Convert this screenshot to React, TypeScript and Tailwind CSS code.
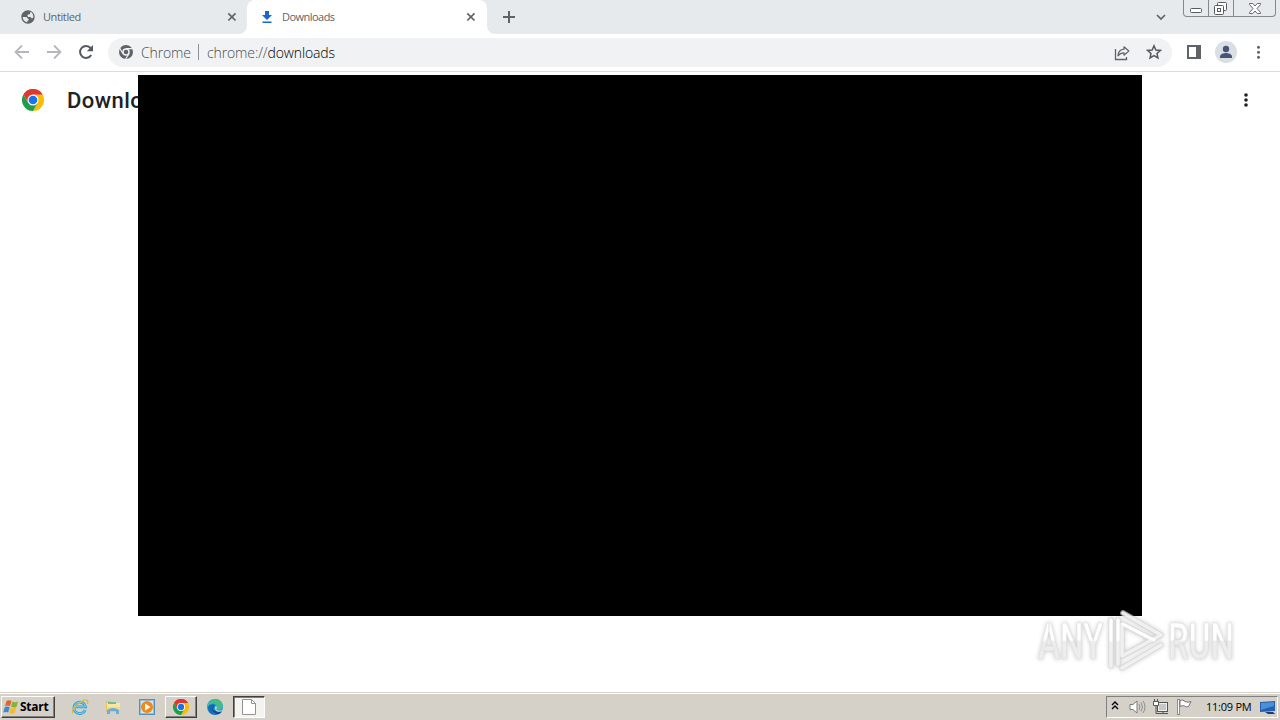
import type { ReactNode } from "react";

function Icon({ w, h, box, className = "", children }: { w: number; h: number; box?: string; className?: string; children: ReactNode }) {
  return (
    <svg width={w} height={h} viewBox={box ?? `0 0 ${w} ${h}`} className={`shrink-0 ${className}`} fill="none">
      {children}
    </svg>
  );
}

const Close = () => (
  <Icon w={10} h={10}>
    <path d="M1.3 1.3l7.2 7.2M8.5 1.3L1.3 8.5" stroke="#5f6368" strokeWidth="1.7" />
  </Icon>
);

const ChromeLogo = ({ size }: { size: number }) => (
  <Icon w={size} h={size} box="0 0 48 48">
    <path d="M24 24L3.2 12A24 24 0 0 1 44.8 12L24 12Z" fill="#ea4335" />
    <path d="M24 12H44.8A24 24 0 0 1 24 48L34.4 30Z" fill="#fbbc04" />
    <path d="M3.2 12L13.6 30L34.4 30L24 48A24 24 0 0 1 3.2 12Z" fill="#1e9e49" />
    <path d="M3.2 12A24 24 0 0 1 44.8 12H24L13.6 30Z" fill="#df392e" />
    <circle cx="24" cy="24" r="12" fill="#fff" />
    <circle cx="24" cy="24" r="9.5" fill="#1a73e8" />
  </Icon>
);

function TabStrip() {
  return (
    <div className="flex h-[34px] shrink-0 bg-[#e7eaed] text-[11px] leading-[34px] text-[#5f6368]">
      <div className="flex w-[247px] items-center pl-[20px]">
        <Icon w={16} h={16} box="0 0 24 24">
          <path fill="#5f6368" d="M12 2C6.48 2 2 6.48 2 12s4.48 10 10 10 10-4.48 10-10S17.52 2 12 2zm8 10c0 .5-.1 1-.2 1.500L17 14l-1-2h-4l-1-3 2-1h2V5l2-.3c1.800 1.400 3 4.200 3 7.300zM4 12h6l1 2 2 1v2l-2 1v1.900C7 19.500 4 16.100 4 12z" />
        </Icon>
        <span className="ml-[7px] w-[184px] tracking-[-0.4px]">Untitled</span>
        <Close />
      </div>
      <div className="relative flex w-[240px] items-center rounded-t-[8px] bg-white pl-[14px]">
        <Icon w={8} h={8} className="absolute -left-[8px] bottom-0"><path d="M8 0V8H0A8 8 0 0 0 8 0" fill="white" /></Icon>
        <Icon w={8} h={8} className="absolute -right-[8px] bottom-0"><path d="M0 0V8H8A8 8 0 0 1 0 0" fill="white" /></Icon>
        <Icon w={12} h={14}>
          <path d="M4 1h4v4h3L6 10 1 5h3zM1.500 11.500h9v1.500h-9z" fill="#1967d2" />
        </Icon>
        <span className="ml-[9px] w-[184px] tracking-[-0.53px]">Downloads</span>
        <Close />
      </div>
      <div className="flex flex-1 items-center pl-[15px]">
        <Icon w={14} h={14}><path d="M7 1v12M1 7h12" stroke="#5f6368" strokeWidth="2" /></Icon>
      </div>
      <div className="flex w-[28px] items-center"><Icon w={12} h={8}><path d="M2 2l4 4 4-4" stroke="#5f6368" strokeWidth="1.7" /></Icon></div>
      <div className="mr-[4px] flex h-[17px] w-[93px] rounded-b-[4px] border border-t-0 border-[#85898e]">
        <div className="flex w-[25px] justify-center border-r border-[#85898e] pt-[8px]">
          <Icon w={12} h={5}><rect x=".5" y=".5" width="11" height="4" rx="1" fill="#fff" stroke="#555b63" /></Icon>
        </div>
        <div className="flex w-[25px] justify-center border-r border-[#85898e] pr-px pt-[2px]">
          <Icon w={13} h={13}>
            <rect x="3.500" y=".5" width="9" height="8" rx="1" stroke="#555b63" fill="#fff" />
            <rect x=".5" y="3.500" width="9" height="9" rx="1" stroke="#555b63" fill="#fff" />
            <rect x="3.500" y="6.500" width="3" height="3" stroke="#555b63" />
          </Icon>
        </div>
        <div className="flex flex-1 justify-center pt-[3px]">
          <Icon w={12} h={11}>
            <path d="M.5.5h3.200L6 3 8.300.5h3.200v1L8 5.500l3.500 4v1H8.300L6 8 3.700 10.500H.5v-1L4 5.500.5 1.500z" fill="#fff" stroke="#555b63" strokeWidth=".9" />
          </Icon>
        </div>
      </div>
    </div>
  );
}

function Toolbar() {
  return (
    <div className="flex h-[38px] shrink-0 items-center border-b border-[#d9dbde] bg-white">
      <div className="flex w-[108px] gap-[16px] pb-px pl-[14px]">
        <Icon w={16} h={16}><path d="M15 8H2M8 1.500L1.500 8 8 14.500" stroke="#b5b7ba" strokeWidth="1.800" /></Icon>
        <Icon w={16} h={16}><path d="M1 8h13M8 1.500L14.500 8 8 14.500" stroke="#b5b7ba" strokeWidth="1.800" /></Icon>
        <Icon w={16} h={16}>
          <path d="M13.200 11A6 6 0 1 1 12.600 4" stroke="#55595e" strokeWidth="2" />
          <path d="M15 1v6.200H8.800z" fill="#55595e" />
        </Icon>
      </div>
      <div className="flex h-[29px] w-[1064px] items-center rounded-full bg-[#f0f2f4] pl-[10px] text-[14px] font-light text-[#484c51]">
        <Icon w={16} h={16} className="-translate-y-px">
          <circle cx="8" cy="8" r="7" fill="#5f6368" />
          <circle cx="8" cy="8" r="3" stroke="#f0f2f4" strokeWidth="1.500" />
          <path d="M8 4.600h6.500M5 9.700L1.600 4M11 9.700L7.600 15" stroke="#f0f2f4" strokeWidth="1.200" />
        </Icon>
        <span className="ml-[7px] w-[57px] tracking-[-0.15px]">Chrome</span>
        <span className="h-[16px] w-px -translate-y-px bg-[#8d9196]" />
        <span className="ml-[8px] flex-1 tracking-[-0.12px]">chrome://<span className="text-black">downloads</span></span>
        <Icon w={16} h={16} className="mr-[16px]">
          <path d="M1.500 4v10.500h11V12" stroke="#5f6368" strokeWidth="1.300" />
          <path d="M10 1.800L14.800 6 10 10.200V7.800C7 7.800 5.500 8.800 4 10.800 4.300 7 6.300 4.500 10 4.200z" stroke="#5f6368" strokeWidth="1.200" strokeLinejoin="round" />
        </Icon>
        <Icon w={16} h={16} className="mr-[10px] -translate-y-px">
          <path d="M8 1.800l1.850 4.150 4.550.45-3.400 3.050.95 4.450L8 11.600 4.050 13.900 5 9.450 1.600 6.400l4.550-.45z" stroke="#55595e" strokeWidth="1.500" />
        </Icon>
      </div>
      <Icon w={14} h={14} className="ml-[15px] -translate-y-px"><path d="M1 1h12v12H1z" stroke="#5f6368" strokeWidth="2" /><path d="M9 0h5v14H9z" fill="#5f6368" /></Icon>
      <Icon w={22} h={22} className="ml-[14px] -translate-y-px">
        <circle cx="11" cy="11" r="11" fill="#dadfe6" />
        <circle cx="11" cy="8" r="3.200" fill="#485475" />
        <path d="M5 17v-1.500C5 13 9 12 11 12s6 1 6 3.500V17z" fill="#485475" />
      </Icon>
      <Icon w={4} h={14} className="ml-[19px] -translate-y-px">
        <circle cx="2.500" cy="2.300" r="1.500" fill="#5f6368" /><circle cx="2.500" cy="7.200" r="1.500" fill="#5f6368" /><circle cx="2.500" cy="12.200" r="1.500" fill="#5f6368" />
      </Icon>
    </div>
  );
}

const Watermark = () => (
  <svg width="210" height="76" viewBox="1030 604 210 76" className="absolute left-[1030px] top-[604px] drop-shadow-[0_0_2px_#00000038]">
    <defs>
      <linearGradient id="letters" x1="0" y1="622" x2="0" y2="660" gradientUnits="userSpaceOnUse">
        <stop offset=".48" stopColor="#fff" />
        <stop offset=".5" stopColor="#ededed" />
      </linearGradient>
    </defs>
    <g fill="url(#letters)" stroke="#dfdfdf" strokeWidth=".7" fontFamily="Roboto, 'Liberation Sans', sans-serif" fontSize="50" fontWeight="500">
      <text transform="scale(.7 1)" x="1482.900" y="659" textLength="93" lengthAdjust="spacingAndGlyphs">ANY</text>
      <text transform="scale(.7 1)" x="1668.600" y="659" textLength="94" lengthAdjust="spacingAndGlyphs">RUN</text>
    </g>
    <g fill="none" strokeLinejoin="round" strokeLinecap="round">
      <g stroke="#d5d5d5" strokeOpacity=".7" strokeWidth="5.500">
        <path d="M1111 620v46M1118 664v-44M1123 613l38 22-39 21V624l31 16M1122 668l39-23" />
      </g>
      <g stroke="#f3f3f3" strokeOpacity=".9" strokeWidth="3.500">
        <path d="M1111 620v46M1118 664v-44M1123 613l38 22-39 21V624l31 16M1122 668l39-23" />
      </g>
      <path d="M1111 620v20M1118 640v-20M1123 624l31 16" stroke="white" strokeWidth="3" />
    </g>
  </svg>
);

function Taskbar() {
  return (
    <div className="flex h-[28px] shrink-0 items-center border-t border-[#d4d0c8] bg-[#d5d1c9] pt-px shadow-[inset_0_1px_0_white]">
      <div className="ml-px flex h-[22px] w-[54px] items-center border border-t-white border-r-[#404040] border-b-[#404040] border-l-white pl-px shadow-[inset_-1px_-1px_0_#808080]">
        <Icon w={17} h={16}>
          <path d="M3.500 2C5.500.8 7 1.200 8.500 2L7 7.200C5.500 6.400 4 6.300 2 7.300z" fill="#e8612c" />
          <path d="M9.500 2.500c2 1 3.500.8 5.500 0L13.500 8c-2 .8-3.500.8-5.500-.2z" fill="#82b536" />
          <path d="M1.700 8.300c2-1 3.500-.8 5 0L5.300 13.500C3.800 12.700 2 12.700.3 13.600z" fill="#3c8bc9" />
          <path d="M7.700 8.800c2 1 3.500.9 5.500 0l-1.500 5.300c-2 .9-3.500.8-5.400-.2z" fill="#f4bd27" />
        </Icon>
        <span className="text-[12px] font-bold leading-[14px] tracking-[-0.25px] text-black">Start</span>
      </div>
      <div className="ml-[16px] flex items-center">
        <Icon w={18} h={18}>
          <path d="M14.200 12A5.800 5.800 0 1 1 14.500 8.800H5" stroke="#2ca3d8" strokeWidth="2.800" />
          <path d="M14.200 12A5.800 5.800 0 1 1 14.500 8.800H5" stroke="#99dcf5" strokeWidth=".8" />
          <path d="M2 15.500C-2 12 13-.7 16.500 2.700c1 1 0 2.500-.4 3.200" stroke="#e4b63b" strokeWidth="1.300" />
        </Icon>
        <Icon w={18} h={18} className="ml-[15px]">
          <path d="M2 3h5l1 2h7v9H2z" fill="#e8c45e" /><path d="M3 5h13v7H3z" fill="#fae79c" />
          <path d="M4 4h8v2H4z" fill="#73bd8e" /><path d="M3 9h13v3H3z" fill="#f3dc82" />
          <path d="M3 16v-4q6-4 12 0v4h-3v-3H6v3z" fill="#69add8" />
        </Icon>
        <Icon w={16} h={16} className="ml-[17px]">
          <rect x=".5" y=".5" width="15" height="15" fill="#91bce0" stroke="#5590c2" />
          <rect x="2" y="2" width="12" height="12" fill="#d8e8f3" />
          <circle cx="8" cy="8" r="6" fill="#f18916" /><path d="M6 4.500L11.500 8 6 11.500z" fill="white" />
        </Icon>
      </div>
      <div className="ml-[10px] flex h-[22px] w-[32px] items-center justify-center border border-t-white border-r-[#404040] border-b-[#404040] border-l-white shadow-[inset_-1px_-1px_0_#808080]">
        <ChromeLogo size={16} />
      </div>
      <Icon w={18} h={18} className="ml-[9px]">
        <circle cx="9" cy="9" r="8" fill="#2398d5" />
        <path d="M5 3q7-5 11 2 2 7-4 7l-2-2q2-2-1-4Q5 4 1 9q0-4 4-6" fill="#43bd86" />
        <path d="M9 7Q4 5 2 9q0 8 9 8Q4 14 7 9" fill="#1669b8" />
        <path d="M9 7q-5 5 3 7 3 0 4-1-2 4-6 3Q4 13 7 8" fill="#0d4d96" />
        <path d="M10 8q2 2 0 3 2 3 7 1l-.7 1q-6 2-7.300-2-.5-2 1-3" fill="#d5d1c9" />
      </Icon>
      <div className="ml-[9px] flex h-[22px] w-[32px] items-center justify-center border border-t-[#404040] border-r-white border-b-white border-l-[#404040] bg-[#f5f3f0] shadow-[inset_1px_1px_0_#808080]">
        <Icon w={14} h={16}><path d="M.5.5h9l4 4v11H.5z" fill="white" stroke="#929292" /><path d="M9.500.5v4h4" stroke="#929292" /></Icon>
      </div>
      <div className="ml-auto mr-[2px] flex h-[22px] w-[172px] items-center border border-t-[#808080] border-r-white border-b-white border-l-[#808080] pl-[5px]">
        <Icon w={8} h={10} className="-translate-x-px -translate-y-px"><path d="M1 4l3-3 3 3M1 8l3-3 3 3" stroke="black" strokeWidth="1.400" /></Icon>
        <Icon w={17} h={16} className="ml-[9px]">
          <path d="M1 5.500h3L8 2v12l-4-3.500H1z" fill="white" stroke="#7c7c7c" />
          <path d="M10 5q2 3 0 6M12 3.500q3 4.500 0 9M14 2q4 6 0 12" stroke="#888" strokeWidth=".9" />
        </Icon>
        <Icon w={17} h={16} className="ml-[6px]">
          <rect x="5.500" y="3.500" width="10" height="9" fill="#eee" stroke="#555" /><rect x="7" y="5" width="7" height="6" fill="#c7c7c7" />
          <path d="M7 14.500h9M11 12v2M2.500 0v3M5.500 0v3" stroke="#555" /><path d="M1.500 2.500h5v4h-5z" fill="white" stroke="#555" /><path d="M4 7v7.500h4" stroke="#555" />
        </Icon>
        <Icon w={17} h={16} className="ml-[7px]">
          <path d="M2.500 0v16" stroke="#777" strokeWidth="2.500" /><path d="M2.500 1v14" stroke="white" />
          <path d="M4 1.500q3-1.500 5 1 3 1.500 6 0l-2.500 5q-2 1-4-.5-2-1-4.500.5z" fill="white" stroke="#777" />
        </Icon>
        <span className="ml-[13px] w-[47px] whitespace-nowrap text-[11px] tracking-[-0.25px] text-black">11:09 PM</span>
        <Icon w={17} h={15} className="ml-[6px]">
          <path d="M1 2l15-1v10L1 12z" fill="#245fb0" /><path d="M2 3l13-1v4L2 10z" fill="#4a8fda" /><path d="M6 12h8l2 2H9z" fill="#183f7a" />
        </Icon>
      </div>
    </div>
  );
}

export default function App() {
  return (
    <div className="relative flex h-[720px] w-[1280px] flex-col overflow-hidden bg-white font-['Open_Sans','Noto_Sans',sans-serif]">
      <TabStrip />
      <Toolbar />
      <main className="flex flex-1 items-start pt-[17px]">
        <div className="ml-[22px] flex h-[22px] items-center"><ChromeLogo size={22} /></div>
        <h1 className="ml-[23px] pt-px font-['Roboto',sans-serif] text-[22px] font-medium leading-[22px] tracking-[0.45px] text-[#202124]">Downloads</h1>
        <Icon w={6} h={16} className="ml-auto mr-[31px] mt-[3px]">
          <circle cx="3" cy="3" r="1.800" fill="#202124" /><circle cx="3" cy="8" r="1.800" fill="#202124" /><circle cx="3" cy="13" r="1.800" fill="#202124" />
        </Icon>
      </main>
      <Taskbar />
      <div className="absolute left-[138px] top-[75px] h-[541px] w-[1004px] bg-black" />
      <Watermark />
    </div>
  );
}
